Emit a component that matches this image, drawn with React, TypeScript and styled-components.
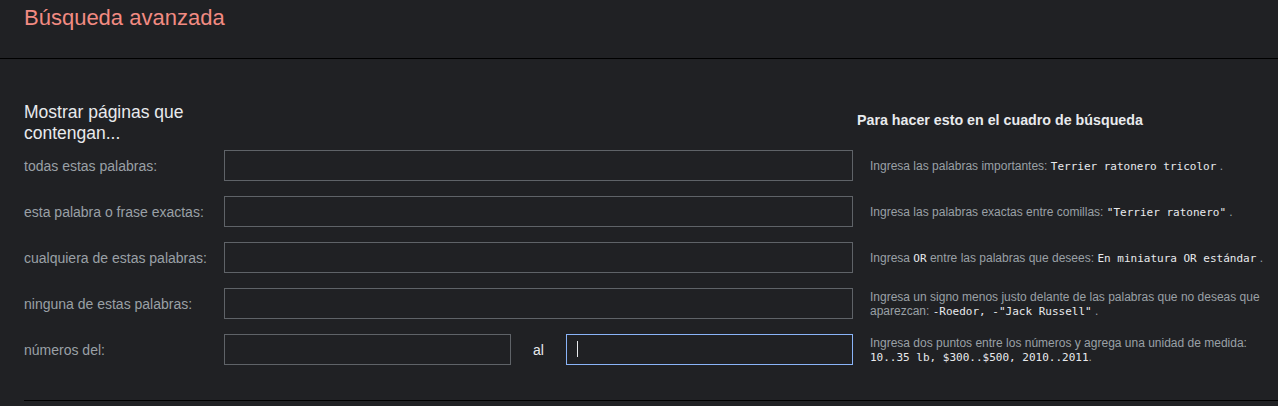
import React from "react";
import styled, { createGlobalStyle } from "styled-components";

const GlobalStyle = createGlobalStyle`
  body {
    margin: 0;
    background: #202124;
    font-family: "Liberation Sans", Arial, sans-serif;
  }
`;

const Page = styled.div`
  width: 1278px;
  height: 406px;
  overflow: hidden;
  background: #202124;
`;

const Header = styled.header`
  height: 59px;
  box-sizing: border-box;
  padding: 5px 24px 0;
  border-bottom: 1px solid #000;
`;

const Title = styled.h1`
  margin: 0;
  font-size: 22px;
  line-height: 25px;
  font-weight: normal;
  color: #f28b82;
`;

const Section = styled.section`
  margin-left: 24px;
  padding-top: 43px;
  padding-bottom: 35px;
  border-bottom: 1px solid #000;
`;

const HeadingRow = styled.div`
  display: grid;
  grid-template-columns: 829px 1fr;
  margin-bottom: 6px;
`;

const Heading = styled.h2`
  margin: 0;
  width: 200px;
  font-size: 17.5px;
  line-height: 21px;
  font-weight: normal;
  color: #e8eaed;
`;

const HintHeading = styled.h3`
  margin: 0;
  padding: 10px 0 0 4px;
  font-size: 14.25px;
  line-height: 16px;
  font-weight: bold;
  color: #e8eaed;
`;

const Rows = styled.div`
  display: flex;
  flex-direction: column;
  gap: 15px;
`;

const Row = styled.div`
  display: grid;
  grid-template-columns: 200px 629px 1fr;
  align-items: center;
`;

const Label = styled.label`
  font-size: 14px;
  color: #9aa0a6;
`;

const Field = styled.div`
  position: relative;
`;

const Input = styled.input<{ $focused?: boolean }>`
  display: block;
  width: 100%;
  height: 31px;
  box-sizing: border-box;
  margin: 0;
  padding: 0 10px;
  border: 1px solid ${(p) => (p.$focused ? "#8ab4f8" : "#5f6368")};
  border-radius: 0;
  outline: none;
  background: #202124;
  color: #e8eaed;
  caret-color: #e8eaed;
  font-family: "Liberation Sans", Arial, sans-serif;
  font-size: 14px;
`;

const Caret = styled.span`
  position: absolute;
  left: 11px;
  top: 7px;
  width: 1px;
  height: 16px;
  background: #e8eaed;
  pointer-events: none;
`;

const Range = styled.div`
  display: grid;
  grid-template-columns: 1fr 55px 1fr;
  align-items: center;
`;

const RangeWord = styled.span`
  text-align: center;
  font-size: 14px;
  color: #e8eaed;
`;

const Hint = styled.div`
  padding: 0 8px 0 17px;
  font-size: 12px;
  line-height: 14px;
  color: #9aa0a6;
`;

const Code = styled.span`
  font-family: "DejaVu Sans Mono", "Liberation Mono", monospace;
  font-size: 11px;
  line-height: 1;
  color: #e8eaed;
`;

const rows = [
  {
    label: "todas estas palabras:",
    hint: (
      <>
        Ingresa las palabras importantes: <Code>Terrier ratonero tricolor</Code> .
      </>
    ),
  },
  {
    label: "esta palabra o frase exactas:",
    hint: (
      <>
        Ingresa las palabras exactas entre comillas: <Code>"Terrier ratonero"</Code> .
      </>
    ),
  },
  {
    label: "cualquiera de estas palabras:",
    hint: (
      <>
        Ingresa <Code>OR</Code> entre las palabras que desees:{" "}
        <Code>En miniatura OR estándar</Code> .
      </>
    ),
  },
  {
    label: "ninguna de estas palabras:",
    hint: (
      <>
        Ingresa un signo menos justo delante de las palabras que no deseas que
        aparezcan: <Code>-Roedor, -"Jack Russell"</Code> .
      </>
    ),
  },
];

export default function App() {
  return (
    <Page>
      <GlobalStyle />
      <Header>
        <Title>Búsqueda avanzada</Title>
      </Header>
      <Section>
        <HeadingRow>
          <Heading>Mostrar páginas que contengan...</Heading>
          <HintHeading>Para hacer esto en el cuadro de búsqueda</HintHeading>
        </HeadingRow>
        <Rows>
          {rows.map((r) => (
            <Row key={r.label}>
              <Label>{r.label}</Label>
              <Input type="text" />
              <Hint>{r.hint}</Hint>
            </Row>
          ))}
          <Row>
            <Label>números del:</Label>
            <Range>
              <Input type="text" />
              <RangeWord>al</RangeWord>
              <Field>
                <Input type="text" $focused />
                <Caret />
              </Field>
            </Range>
            <Hint>
              Ingresa dos puntos entre los números y agrega una unidad de medida:{" "}
              <Code>10..35 lb, $300..$500, 2010..2011</Code>.
            </Hint>
          </Row>
        </Rows>
      </Section>
    </Page>
  );
}
